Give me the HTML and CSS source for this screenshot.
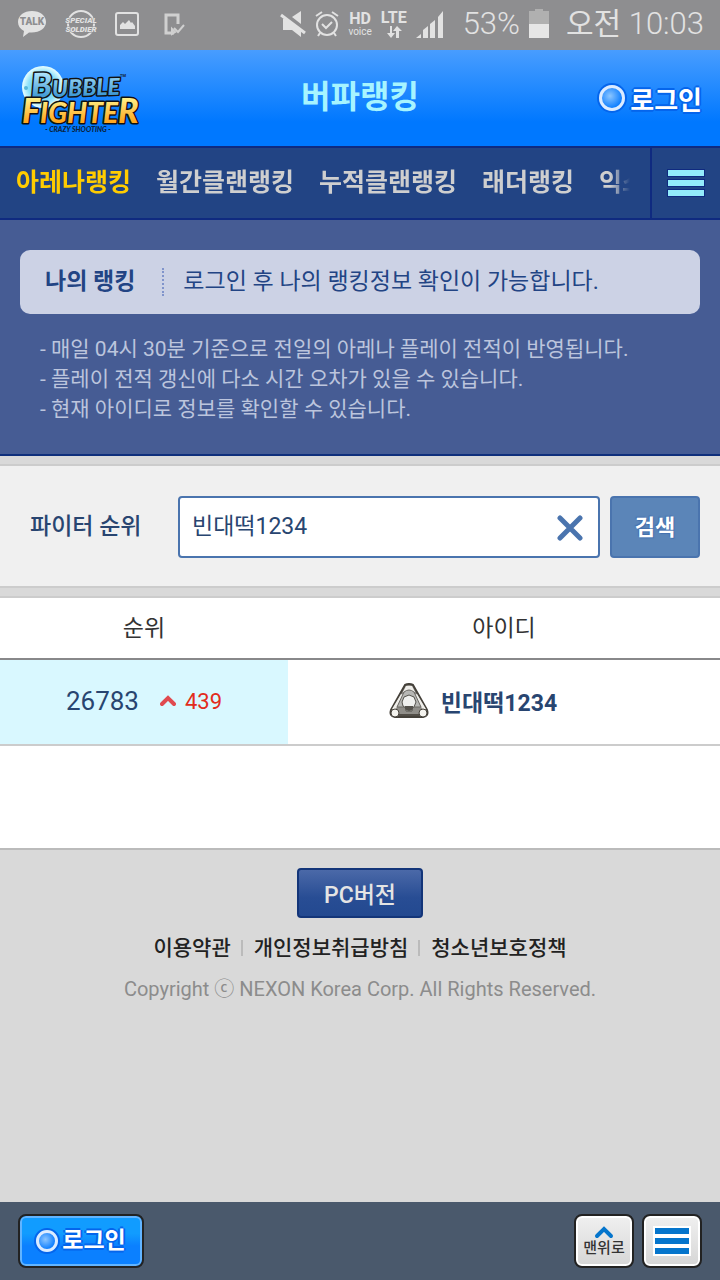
FILE: index.html
```
<!DOCTYPE html>
<html lang="ko">
<head>
    <meta charset="UTF-8">
    <meta name="viewport" content="width=device-width, initial-scale=1.0">
    <title>버파랭킹</title>
    <link rel="stylesheet" href="styles.css">
</head>
<body>
    <div class="status-bar">
        <div class="status-left">
            <svg width="32" height="28" viewBox="0 0 30 28">
                <path d="M15 1C7 1 1 5.600 1 12c0 4 2.200 7 6 9l-1 6 6-4.600c10 1 17-4 17-10.400C29 5.600 23 1 15 1z" fill="#e2e2e2"/>
                <text x="15" y="15" text-anchor="middle" class="talk-text">TALK</text>
            </svg>
            <svg width="32" height="30" viewBox="0 0 32 30">
                <circle cx="16" cy="15" r="13" fill="none" stroke="#e2e2e2" stroke-width="2"/>
                <text x="16" y="14" text-anchor="middle" class="soldier-text">SPECIAL</text>
                <text x="16" y="23" text-anchor="middle" class="soldier-text">SOLDIER</text>
            </svg>
            <svg width="26" height="26" viewBox="0 0 26 26">
                <rect x="2" y="2" width="22" height="22" rx="2" fill="none" stroke="#e2e2e2" stroke-width="2"/>
                <path d="M6 18v-4l3-3 2 2 4-4 2 3 1-1 3 4v3z" fill="#e2e2e2"/>
            </svg>
            <svg width="22" height="24" viewBox="0 0 22 24">
                <path d="M15 12V3H3v18h8" fill="none" stroke="#d0d0d0" stroke-width="3"/>
                <path d="M9 22l3-2-3-3zM11 16l4 4 6-7" fill="none" stroke="#d0d0d0" stroke-width="2"/>
            </svg>
        </div>
        <div class="status-right">
            <svg width="26" height="28" viewBox="0 0 26 28">
                <path d="M3 9h3l15 12v6l-9-7H3z" fill="#e2e2e2"/>
                <path d="M12 7l9-6v13z" fill="#e2e2e2"/>
                <path d="M1 5l24 18" stroke="#e2e2e2" stroke-width="3"/>
            </svg>
            <svg width="24" height="28" viewBox="0 0 24 28">
                <circle cx="12" cy="15" r="10" fill="none" stroke="#e2e2e2" stroke-width="2"/>
                <path d="M1 6l6-4M23 6l-6-4M7 14l4 4 6-6M5 23l-2 3M19 23l2 3" fill="none" stroke="#e2e2e2" stroke-width="2"/>
            </svg>
            <span class="hd"><b>HD</b><span>voice</span></span>
            <span class="lte">LTE
                <svg width="16" height="12" viewBox="0 0 16 12">
                    <path d="M4 0v7H1l4 5 4-5H6V0zM10 12V5H7l4-5 5 5h-3v7z" fill="#e2e2e2"/>
                </svg>
            </span>
            <svg width="28" height="28" viewBox="0 0 28 28">
                <path d="M0 28l5-4v4zM7 28v-8l5-4v12zM14 28V14l5-4v18zM22 28V7l5-6v27z" fill="#e2e2e2"/>
            </svg>
            <span class="percent">53%</span>
            <svg class="battery" width="20" height="30" viewBox="0 0 20 30">
                <path d="M0 2h6V0h8v2h6v14H0z" fill="#b0b0b0"/>
                <path d="M0 15h20v14H0z" fill="#e6e6e6"/>
            </svg>
            <span class="time"><span class="ampm">오전</span> 10:03</span>
        </div>
    </div>

    <header class="header">
        <a href="#" class="logo" aria-label="Bubble Fighter">
            <svg width="124" height="72" viewBox="0 0 124 72">
                <defs>
                    <linearGradient id="bubble" x1="0" y1="0" x2="0" y2="1">
                        <stop offset="0.200" stop-color="#b4e8fd"/>
                        <stop offset="0.800" stop-color="#429bd5"/>
                    </linearGradient>
                    <linearGradient id="fighter" x1="0" y1="0" x2="0" y2="1">
                        <stop offset="0.200" stop-color="#fff48d"/>
                        <stop offset="0.800" stop-color="#ffa61e"/>
                    </linearGradient>
                    <radialGradient id="ball">
                        <stop offset="0" stop-color="#35bff2"/>
                        <stop offset="0.700" stop-color="#8de1fa"/>
                        <stop offset="1" stop-color="#eaffff"/>
                    </radialGradient>
                </defs>
                <circle cx="25" cy="25" r="21" fill="url(#ball)"/>
                <circle cx="8" cy="26" r="2" fill="#55b8da"/>
                <text x="13" y="34" class="logo-bubble" transform="rotate(-2 60 30)"><tspan class="logo-cap">B</tspan>UBBLE</text>
                <text x="4" y="61" class="logo-fighter"><tspan class="logo-big">F</tspan>IGHTE<tspan class="logo-big">R</tspan></text>
                <text x="102" y="15" class="logo-tm">TM</text>
                <text x="60" y="70" text-anchor="middle" class="logo-sub">- CRAZY SHOOTING -</text>
            </svg>
        </a>
        <h1>버파랭킹</h1>
        <a href="#" class="login"><i class="ring"></i>로그인</a>
    </header>

    <nav class="nav">
        <div class="tabs">
            <a href="#" class="active">아레나랭킹</a>
            <a href="#">월간클랜랭킹</a>
            <a href="#">누적클랜랭킹</a>
            <a href="#">래더랭킹</a>
            <a href="#">익스</a>
        </div>
        <button type="button" class="nav-menu" aria-label="전체 메뉴">
            <i></i><i></i><i></i>
        </button>
    </nav>

    <section class="my-ranking">
        <div class="my-box">
            <strong>나의 랭킹</strong>
            <span>로그인 후 나의 랭킹정보 확인이 가능합니다.</span>
        </div>
        <ul>
            <li>- 매일 04시 30분 기준으로 전일의 아레나 플레이 전적이 반영됩니다.</li>
            <li>- 플레이 전적 갱신에 다소 시간 오차가 있을 수 있습니다.</li>
            <li>- 현재 아이디로 정보를 확인할 수 있습니다.</li>
        </ul>
    </section>

    <form class="search">
        <label for="fighter-name">파이터 순위</label>
        <div class="search-field">
            <input type="text" id="fighter-name" value="빈대떡1234">
            <button type="button" class="clear" aria-label="지우기">
                <svg width="26" height="26" viewBox="0 0 26 26">
                    <path d="M3 3l20 20M23 3L3 23" stroke="#4a74ae" stroke-width="5" stroke-linecap="round"/>
                </svg>
            </button>
        </div>
        <button type="button" class="search-btn">검색</button>
    </form>

    <main class="result">
        <table>
            <thead>
                <tr>
                    <th class="col-rank">순위</th>
                    <th>아이디</th>
                </tr>
            </thead>
            <tbody>
                <tr>
                    <td class="rank">
                        <div class="cell">
                            <span class="rank-num">26783</span>
                            <svg width="16" height="12" viewBox="0 0 16 12">
                                <path d="M2 9l6-6 6 6" fill="none" stroke="#e04a4f" stroke-width="4" stroke-linecap="round"/>
                            </svg>
                            <span class="rank-up">439</span>
                        </div>
                    </td>
                    <td>
                        <div class="cell">
                            <svg class="emblem" width="40" height="36" viewBox="0 0 40 36">
                                <path d="M16 2q4-2 8 0l14 25q2 6-4 7H6q-6-1-4-7z" fill="#8f8d88" stroke="#45413a" stroke-width="2"/>
                                <path d="M17 3h6l3 6H14zM12 11l3 1-9 15-3-1zM28 11l-3 1 9 15 3-1z" fill="#efeeea"/>
                                <path d="M15 9q5-4 10 0l7 15H8z" fill="#b7b7b4" stroke="#6d6a65"/>
                                <path d="M5 32h30" stroke="#514d46" stroke-width="2"/>
                                <path d="M15 14l5-2 5 2 2 5-2 5-2 1v3h-6v-3l-3-2-1-4z" fill="#f0f0ee" stroke="#55524c" stroke-width="1"/>
                                <path d="M16 23h8v3q-4 4-8 0z" fill="#55524c"/>
                                <circle cx="6" cy="30" r="4" fill="#f4f3ee" stroke="#45413a"/>
                                <circle cx="34" cy="30" r="4" fill="#f4f3ee" stroke="#45413a"/>
                            </svg>
                            <strong>빈대떡1234</strong>
                        </div>
                    </td>
                </tr>
            </tbody>
        </table>
    </main>

    <footer class="footer">
        <button type="button" class="pc-btn">PC버전</button>
        <div class="links">
            <a href="#">이용약관</a>
            <a href="#">개인정보취급방침</a>
            <a href="#">청소년보호정책</a>
        </div>
        <p>Copyright ⓒ NEXON Korea Corp. All Rights Reserved.</p>
    </footer>

    <div class="toolbar">
        <button type="button" class="tool-login"><i class="ring"></i>로그인</button>
        <button type="button" class="tool-btn">
            <svg width="20" height="14" viewBox="0 0 20 14">
                <path d="M3 11l7-7 7 7" fill="none" stroke="#0575cc" stroke-width="4" stroke-linecap="round"/>
            </svg>
            맨위로
        </button>
        <button type="button" class="tool-btn" aria-label="메뉴">
            <svg width="38" height="30" viewBox="0 0 38 30">
                <path d="M0 0h38v30H0z" fill="#fff"/>
                <path d="M2 2h34v6H2zM2 12h34v6H2zM2 22h34v6H2z" fill="#0575cc"/>
            </svg>
        </button>
    </div>
</body>
</html>
```
FILE: styles.css
```
* {
    box-sizing: border-box;
}
body {
    display: flex;
    flex-direction: column;
    min-height: 100vh;
    margin: 0;
    background-color: #d9d9d9;
    font-family: Roboto, "Noto Sans CJK KR", sans-serif;
    font-size: 23px;
}
h1, p, ul {
    margin: 0;
    padding: 0;
}
ul {
    list-style: none;
}
a {
    color: inherit;
    text-decoration: none;
}
button, input {
    font-family: inherit;
    padding: 0;
}
button {
    cursor: pointer;
}
svg {
    flex-shrink: 0;
}

/* status bar */
.status-bar {
    display: flex;
    justify-content: space-between;
    align-items: center;
    height: 50px;
    padding: 0 16px 2px;
    background-color: #8e8e90;
    color: #e2e2e2;
}
.status-left {
    display: flex;
    align-items: center;
    gap: 17px;
}
.status-left svg:last-child {
    margin-left: 6px;
}
.status-right {
    display: flex;
    align-items: center;
    gap: 9px;
}
.talk-text {
    font: 900 10px Roboto, sans-serif;
    fill: #8e8e90;
}
.soldier-text {
    font: italic 900 8px Roboto, sans-serif;
    fill: #e2e2e2;
    stroke: #8e8e90;
    stroke-width: 1px;
    paint-order: stroke;
}
.hd, .lte {
    display: flex;
    flex-direction: column;
    align-items: center;
    font-size: 10px;
    line-height: 10px;
}
.hd b {
    font-size: 16px;
    line-height: 16px;
}
.lte {
    font-size: 16px;
    font-weight: bold;
    line-height: 16px;
}
.percent, .time {
    font-size: 31px;
    font-weight: 300;
    line-height: 48px;
    white-space: nowrap;
}
.percent {
    margin-left: 10px;
}
.ampm {
    font-size: 30px;
    font-weight: 400;
}
.battery {
    margin-right: 8px;
}

/* header */
.header {
    display: grid;
    grid-template-columns: 1fr auto 1fr;
    align-items: center;
    height: 96px;
    padding: 0 18px;
    background: linear-gradient(#489dff, #0078ff 75%);
}
.logo svg {
    display: block;
}
.logo-bubble {
    font: italic 900 23px Lato, sans-serif;
    fill: url(#bubble);
    stroke: #111;
    stroke-width: 3px;
    stroke-linejoin: round;
    paint-order: stroke;
}
.logo-cap {
    font-size: 34px;
}
.logo-fighter {
    font: italic 900 28px Lato, sans-serif;
    fill: url(#fighter);
    stroke: #111;
    stroke-width: 3px;
    stroke-linejoin: round;
    paint-order: stroke;
}
.logo-big {
    font-size: 34px;
}
.logo-tm {
    font: bold 4px Roboto, sans-serif;
    fill: #123;
}
.logo-sub {
    font: italic 900 7px Lato, sans-serif;
    fill: #0b2440;
}
.header h1 {
    padding-bottom: 2px;
    color: #a6f4ff;
    font-size: 32px;
    line-height: 48px;
}
.login {
    display: flex;
    justify-content: flex-end;
    align-items: center;
    gap: 5px;
    color: #fff;
    font-size: 26px;
    font-weight: bold;
    text-shadow: 2px 0 #0565ec, -2px 0 #0565ec, 0 2px #0565ec, 0 -2px #0565ec, 1px 1px #0565ec, -1px -1px #0565ec;
}
.ring {
    width: 26px;
    height: 26px;
    border: 3px solid #dcebff;
    border-radius: 50%;
    background: radial-gradient(circle at 40% 40%, #8cc6ff, #1180ff 70%);
    box-shadow: 0 0 0 2px #0565ec;
}

/* nav */
.nav {
    display: flex;
    height: 74px;
    border-top: 2px solid #0f2a80;
    border-bottom: 2px solid #0f2a80;
    background-color: #224484;
}
.tabs {
    display: flex;
    flex: 1;
    align-items: center;
    gap: 25px;
    padding: 0 20px 6px 16px;
    overflow: hidden;
    color: #cfcfcf;
    font-size: 25px;
    font-weight: bold;
    white-space: nowrap;
    -webkit-mask-image: linear-gradient(to left, transparent 20px, #000 40px);
    mask-image: linear-gradient(to left, transparent 20px, #000 40px);
}
.tabs .active {
    color: #ffcc00;
}
.nav-menu {
    display: flex;
    flex-direction: column;
    justify-content: center;
    align-items: center;
    gap: 2px;
    width: 70px;
    border: none;
    border-left: 2px solid #0f2a80;
    background: none;
}
.nav-menu i {
    width: 38px;
    height: 8px;
    background-color: #93ebfb;
    border: 1px solid #0f2a80;
}

/* my ranking */
.my-ranking {
    padding: 30px 20px;
    border-bottom: 2px solid #0f2f7c;
    background-color: #465c94;
}
.my-box {
    display: flex;
    align-items: center;
    height: 64px;
    padding: 0 25px;
    border-radius: 10px;
    background-color: #ccd2e5;
    color: #224484;
}
.my-box strong {
    padding-right: 27px;
    line-height: 28px;
}
.my-box span {
    padding-left: 19px;
    border-left: 2px dotted #8094cb;
    line-height: 28px;
}
.my-ranking ul {
    margin-top: 20px;
    padding-left: 20px;
    color: #bcc5dd;
    font-size: 21px;
    line-height: 30px;
}

/* search */
.search {
    display: flex;
    align-items: center;
    gap: 10px;
    margin: 8px 0;
    padding: 30px 20px 28px 30px;
    border-top: 2px solid #ccc;
    border-bottom: 2px solid #ccc;
    background-color: #f0f0f0;
}
.search label {
    width: 138px;
    padding-bottom: 6px;
    color: #284570;
    font-weight: 500;
}
.search-field {
    position: relative;
    flex: 1;
}
.search-field input {
    display: block;
    width: 100%;
    height: 62px;
    padding: 0 56px 6px 12px;
    border: 2px solid #4a74ae;
    border-radius: 4px;
    background-color: #fff;
    color: #284570;
    font-size: 23px;
}
.clear {
    position: absolute;
    top: 19px;
    right: 17px;
    height: 26px;
    border: none;
    background: none;
}
.clear svg {
    display: block;
}
.search-btn {
    width: 90px;
    height: 62px;
    padding-bottom: 4px;
    border: 2px solid #4a74ae;
    border-radius: 4px;
    background-color: #5b85b8;
    color: #fff;
    font-size: 22px;
    font-weight: bold;
    text-shadow: 1px 1px 1px #4470ae, -1px -1px 1px #4470ae;
}

/* result */
.result {
    min-height: 254px;
    border-top: 2px solid #ccc;
    border-bottom: 2px solid #bbb;
    background-color: #fff;
}
.result table {
    width: 100%;
    border-collapse: separate;
    border-spacing: 0;
}
.result th {
    height: 62px;
    padding: 0 0 4px;
    border-bottom: 2px solid #88888a;
    color: #333;
    font-weight: normal;
}
.col-rank {
    width: 40%;
}
.result td {
    height: 86px;
    padding: 0 0 2px;
    border-bottom: 2px solid #ccc;
    color: #284570;
}
.result .rank {
    background-color: #d9f8ff;
}
.cell {
    display: flex;
    justify-content: center;
    align-items: center;
}
.rank-num {
    margin-right: 21px;
    font-size: 26px;
}
.rank-up {
    margin-left: 9px;
    color: #e22c1c;
    font-size: 22px;
}
.emblem {
    margin-right: 12px;
}
.result td:last-child .cell {
    padding-right: 62px;
}

/* footer */
.footer {
    flex: 1;
    padding-top: 18px;
    text-align: center;
}
.pc-btn {
    width: 126px;
    height: 50px;
    border: 2px solid #133579;
    border-radius: 4px;
    background: linear-gradient(#4b69a8, #284d94 60%, #234990);
    color: #e4e4e4;
    font-size: 23px;
    font-weight: 500;
}
.links {
    display: flex;
    justify-content: center;
    align-items: center;
    height: 60px;
    color: #222;
    font-size: 21px;
    font-weight: 500;
}
.links a {
    line-height: 16px;
}
.links a + a {
    margin-left: 10px;
    padding-left: 11px;
    border-left: 2px solid #bbb;
}
.footer p {
    color: #8c8c8c;
    font-size: 20px;
    line-height: 22px;
}

/* bottom toolbar */
.toolbar {
    position: sticky;
    bottom: 0;
    display: flex;
    gap: 8px;
    height: 78px;
    padding: 12px 18px;
    background-color: #4a596c;
}
.tool-login {
    display: flex;
    justify-content: center;
    align-items: center;
    gap: 4px;
    width: 126px;
    height: 54px;
    margin-right: auto;
    border: 2px solid #222;
    border-radius: 8px;
    background: linear-gradient(#119cff 35%, #0b80ff 60%);
    box-shadow: inset 0 0 0 2px #62b4ff;
    color: #fff;
    font-size: 23px;
    font-weight: bold;
    line-height: 30px;
    text-shadow: 2px 0 #0565ec, -2px 0 #0565ec, 0 2px #0565ec, 0 -2px #0565ec;
}
.tool-login .ring {
    width: 22px;
    height: 22px;
}
.tool-btn {
    display: flex;
    flex-direction: column;
    justify-content: center;
    align-items: center;
    width: 60px;
    height: 54px;
    border: 2px solid #222;
    border-radius: 8px;
    background: linear-gradient(#f0f0f0, #d6d6d6);
    box-shadow: inset 0 0 0 2px #fff;
    color: #333;
    font-size: 15px;
    font-weight: 500;
    line-height: 18px;
}
```
